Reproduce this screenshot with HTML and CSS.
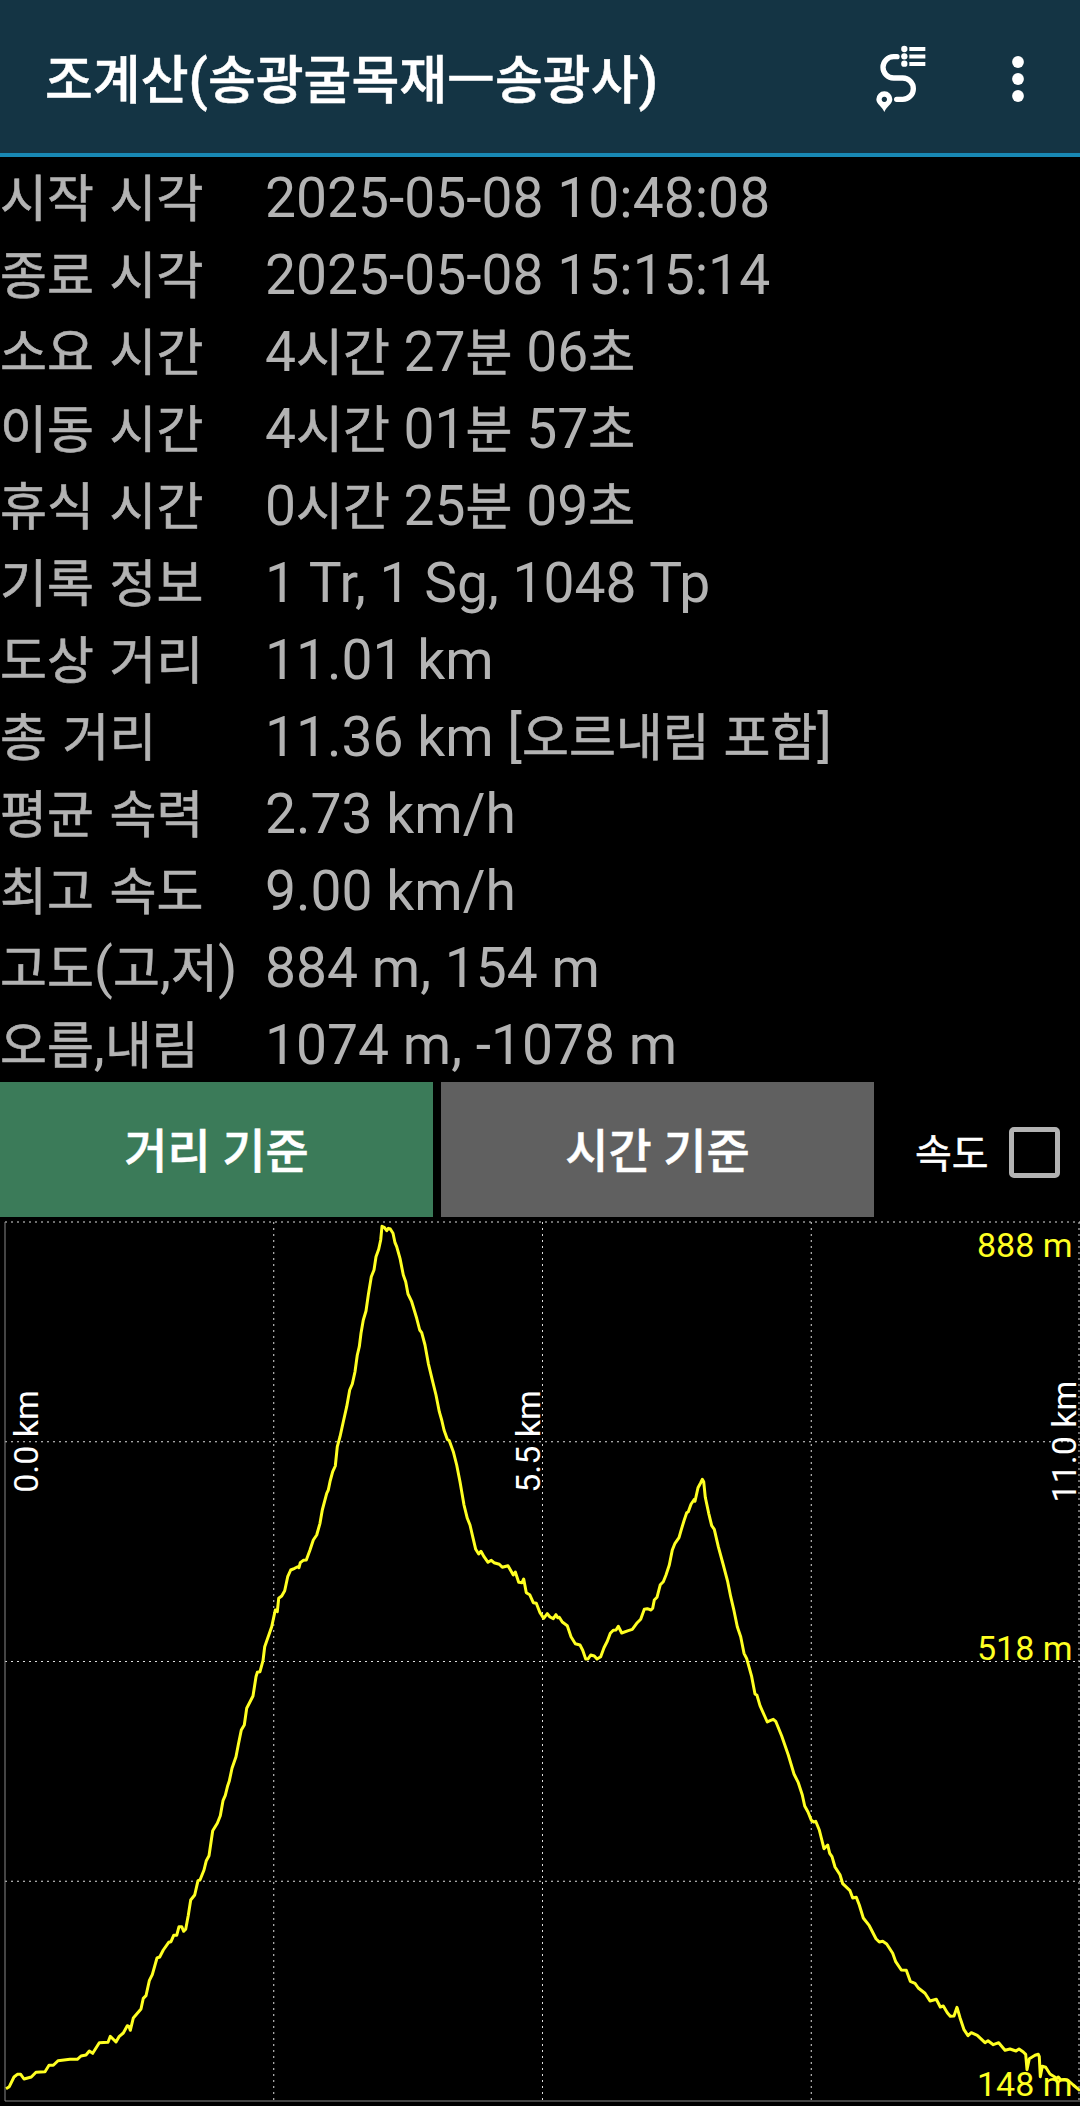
FILE: index.html
```
<!DOCTYPE html>
<html lang="ko">
  <head>
    <meta charset="utf-8">
    <meta name="viewport" content="width=device-width,initial-scale=1">
    <title>조계산(송광굴목재ㅡ송광사)</title>
    <link rel="stylesheet" href="styles.css">
  </head>
  <body>
    <div class="header">
      <h1 class="title">조계산<span class="en">(</span>송광굴목재ㅡ송광사<span class="en">)</span></h1>
      <svg class="icon-route" viewBox="110 75 150 204">
        <path d="M173 110H163A32 32 0 0 0 163 174H190A32 32 0 0 1 190 238H172" fill="none" stroke="#fff" stroke-width="16" stroke-linecap="round"/>
        <g fill="#fff">
          <circle cx="195" cy="87" r="9.5"/>
          <circle cx="195" cy="109" r="9.5"/>
          <circle cx="195" cy="131" r="9.5"/>
          <path d="M210 81h48v12h-48zM210 103.500h48v12h-48zM210 126h48v12h-48z"/>
          <path fill-rule="evenodd" d="M135 276C128 260 111 252 111 238A24 24 0 0 1 159 238C159 252 142 260 135 276ZM135 230a8 8 0 1 0 .1 0z"/>
        </g>
      </svg>
      <svg class="icon-more" viewBox="0 0 12 48">
        <circle cx="6" cy="7" r="5.900"/>
        <circle cx="6" cy="24" r="5.900"/>
        <circle cx="6" cy="41" r="5.900"/>
      </svg>
    </div>
    <div class="info">
      <div class="row"><span class="label">시작 시각</span><span class="value">2025-05-08 10:48:08</span></div>
      <div class="row"><span class="label">종료 시각</span><span class="value">2025-05-08 15:15:14</span></div>
      <div class="row"><span class="label">소요 시간</span><span class="value">4<b>시간</b> 27<b>분</b> 06<b>초</b></span></div>
      <div class="row"><span class="label">이동 시간</span><span class="value">4<b>시간</b> 01<b>분</b> 57<b>초</b></span></div>
      <div class="row"><span class="label">휴식 시간</span><span class="value">0<b>시간</b> 25<b>분</b> 09<b>초</b></span></div>
      <div class="row"><span class="label">기록 정보</span><span class="value">1 Tr, 1 Sg, 1048 Tp</span></div>
      <div class="row"><span class="label">도상 거리</span><span class="value">11.01 km</span></div>
      <div class="row"><span class="label">총 거리</span><span class="value">11.36 km [<b>오르내림</b> <b>포함</b>]</span></div>
      <div class="row"><span class="label">평균 속력</span><span class="value">2.73 km/h</span></div>
      <div class="row"><span class="label">최고 속도</span><span class="value">9.00 km/h</span></div>
      <div class="row"><span class="label">고도<span class="en">(</span>고<span class="en">,</span>저<span class="en">)</span></span><span class="value">884 m, 154 m</span></div>
      <div class="row"><span class="label">오름<span class="en">,</span>내림</span><span class="value">1074 m, -1078 m</span></div>
    </div>
    <div class="tabs">
      <div class="tab active">거리 기준</div>
      <div class="tab">시간 기준</div>
      <div class="speed"><span>속도</span><i class="check"></i></div>
    </div>
    <svg class="chart" viewBox="0 1217 1080 889">
      <g class="grid">
        <path d="M5 1222H1080M5 1441.750H1080M5 1661.500H1080M5 1881.250H1080"/>
        <path d="M273.750 1222V2101M542.500 1222V2101M811.250 1222V2101M1079 1222V2101"/>
      </g>
      <path class="axis" d="M5 1222V2101H1080"/>
      <g class="km">
        <text transform="translate(38 1441.500) rotate(-90)">0.0 km</text>
        <text transform="translate(540 1441.500) rotate(-90)">5.5 km</text>
        <text transform="translate(1076 1441.500) rotate(-90)">11.0 km</text>
      </g>
      <polyline class="alt" points="
        6,2088.7 9.3,2086.7 14,2077 17.3,2074.3 20.7,2074.3 24,2079 31.3,2077 36,2072.3 45,2071.7 49,2065.3
        53.3,2065.3 58,2060.7 70,2059.3 77.3,2059.3 81,2056 86,2055 89.3,2051 92.7,2053.3 99.3,2042.7 108,2042.3
        110.3,2036.3 116,2042 119.3,2036.3 123.3,2033 127.3,2025.7 129,2026.3 130.3,2030.3 133.3,2018 141,2009 143.3,1998.3
        146,1995.7 149.3,1980.7 152.3,1974.7 157,1958 159.7,1957 163.3,1950 168.7,1942.3 171,1941.7 173.7,1935.3 176.7,1935.3
        179,1926.7 181.7,1926.7 183.7,1931.3 185.7,1929.3 188.3,1915.3 190.7,1900 194.7,1895 198,1880.7 200,1880 204,1870
        206.3,1860.7 209,1855.7 212.7,1830.7 217.3,1823.3 220.3,1815.7 223,1800.7 225.3,1795.3 227.7,1785.7 229.3,1781 232,1768.3
        236,1756.7 238.3,1744.7 241.3,1730 244.3,1725 246.7,1708.3 253,1696 256,1676.7 257.3,1672.3 260,1671.7 263,1660.7
        264.7,1646.7 271.7,1626.7 275.3,1610 277.3,1611.7 278.7,1598.3 281.7,1596 284.7,1590.7 287.7,1576.7 290.7,1570 294.7,1568.3
        297.7,1566.7 299,1567.7 300.3,1562.7 303.3,1560.3 306.3,1560 310,1550 313.3,1540 316.7,1535 320,1523.3 322.3,1510
        326.7,1493.3 328.3,1490 330,1481.7 332.7,1471.7 335.3,1466 337.3,1446.7 340,1436.7 343.3,1421.7 346.7,1406.7 349.7,1390
        352.3,1384 355,1371.7 357.3,1355 359.3,1346.7 361,1333.3 363.3,1320 366,1311 368.3,1295 371.3,1276.7 374,1270
        376,1256.7 378.7,1249.3 380.7,1240 382,1226.3 384.3,1227.3 386.7,1230.7 388.3,1228.3 390.3,1229 393,1233.3 395,1242.7
        396.7,1246.7 400,1258.3 403.3,1275 405.7,1281.7 408,1294 411.7,1301.7 416.7,1318.3 419.7,1330 421.7,1332.7 425,1345
        428.3,1363.3 432.7,1381.7 436,1395 439.3,1411.7 441.7,1420 444,1430 447.3,1439.3 449.3,1440.7 453.3,1451.7 456.7,1465
        460,1481.7 464,1505 467.3,1518.3 470,1525 472.7,1536.7 475.7,1549.3 478.7,1554 481,1551.3 484,1556.7 488,1562.3
        491.3,1560.3 494,1562.7 499.3,1564.3 502.3,1567.3 508,1565.7 513.3,1575 515.3,1572 518.7,1582.3 522,1582.7 523.7,1579
        526.3,1592.7 529.7,1594.7 533.3,1602.7 536.3,1603.3 540,1612.7 543.7,1618.3 547.3,1613.7 550,1617 553.3,1618.7 556,1614.7
        557.7,1617.7 559.3,1617.3 562.3,1622 567.3,1625.7 571,1636.7 575.3,1643.7 580,1645 582.7,1650.3 585.7,1659 588,1659
        590.7,1655 594.3,1656 597,1659 600.7,1656.7 604,1647.7 607.3,1641.3 610.3,1633.3 613.3,1630.3 616,1630 618.3,1626.3
        621.7,1633 628.3,1630.7 632.3,1629.3 636.7,1623.3 640.7,1619.3 644.3,1609.3 647.3,1608.7 651,1610 652.7,1608.3 654.3,1600
        657,1597.3 660.3,1584.7 663.3,1581.7 666,1575 669.3,1565 672.3,1550 675,1543.3 679,1537.7 681,1530.7 684,1520.7
        686.7,1512.7 688.3,1511.7 691,1504.3 694,1499.7 695,1501.3 698,1487.7 700.7,1482.7 702.3,1479.3 703.7,1481.7 705.3,1497.3
        708.7,1513.3 711.7,1525.7 714.3,1529.3 718.3,1546.7 723.3,1565 727.7,1581.7 730.7,1596.7 734,1610.7 737.3,1626.7 740.7,1636.7
        744,1653.3 746.7,1658.7 751.7,1676.7 755,1694 757,1695.3 760,1705.7 767.3,1722 770,1720.7 773.3,1719.3 775.7,1721.3
        781.7,1736 788.3,1755 794,1774 798.3,1782.7 802.3,1795 804.7,1806 808,1812 811.3,1820.3 813.7,1822 815.7,1821.3
        819.3,1830 824,1848.7 827.7,1845 829.7,1853.3 832,1856.7 835,1867 840,1874.7 842.7,1883.7 850,1890.7 852.7,1898
        856.3,1897.3 859.3,1905 863.3,1918 869.3,1925.7 876,1938.7 879.3,1942 882.7,1941.3 886.7,1944 892.7,1953.3 895.7,1961.7
        901.3,1970 906.3,1970.3 910.3,1981.3 915,1983.3 918.3,1988 925,1993.3 930,2001 936.3,1999.3 940.3,2007 943.3,2006
        947.3,2012.7 950.3,2016.3 954,2016 957,2007.3 960,2017.7 964,2029.7 968,2035.7 971.3,2032.7 977.3,2035.3 985,2042.7
        988,2040.7 993.3,2044.7 998.7,2042.7 1005,2050.3 1010,2049 1016,2051 1019,2049 1023.3,2052 1025.7,2054.3 1027,2069.7
        1029.3,2058.7 1035,2055.3 1038.3,2054.3 1039.3,2056.7 1040.3,2076.7 1042.3,2066.3 1045.7,2067.3 1050,2074 1056.7,2078.3 1058.3,2077
        1060.7,2080 1067.7,2080 1073.3,2085 1080,2090.7"/>
      <g class="height">
        <text x="1072.500" y="1257">888 m</text>
        <text x="1072.500" y="1660">518 m</text>
        <text x="1072.500" y="2095.500">148 m</text>
      </g>
    </svg>
  </body>
</html>
```
FILE: styles.css
```
* {
  margin: 0;
  padding: 0;
  box-sizing: border-box;
}
body {
  width: 1080px;
  background: #000;
  color: #b3b3b3;
  font-family: Roboto, "Noto Sans CJK KR", sans-serif;
}
.header {
  display: flex;
  align-items: center;
  height: 157px;
  padding: 0 56px 0 45px;
  background: #143444;
  border-bottom: 4px solid #1888b4;
}
.title {
  flex: 1;
  padding-top: 9px;
  color: #fff;
  font-size: 52px;
  font-weight: 500;
  line-height: 76px;
  white-space: nowrap;
  -webkit-text-stroke: 0.500px #fff;
}
.title .en {
  font-size: 56px;
}
.icon-route {
  width: 50px;
  height: 68px;
  margin: 4px 86px 0 0;
}
.icon-more {
  width: 12px;
  height: 48px;
  margin-top: 5px;
  fill: #fff;
}
.info {
  height: 925px;
  padding-top: 3px;
}
.row {
  display: flex;
  align-items: baseline;
  height: 77px;
  line-height: 77px;
  font-size: 55.200px;
  white-space: nowrap;
}
.label {
  width: 265px;
  font-size: 51px;
  word-spacing: 3px;
  -webkit-text-stroke: 0.600px #b3b3b3;
}
.label .en {
  font-size: 56px;
  -webkit-text-stroke: 0;
}
.value b {
  font-size: 51px;
  font-weight: normal;
  -webkit-text-stroke: 0.600px #b3b3b3;
}
.tabs {
  display: flex;
  gap: 8px;
  height: 135px;
}
.tab {
  width: 433px;
  padding-top: 2px;
  background: #606060;
  color: #fff;
  font-size: 47px;
  font-weight: 500;
  line-height: 135px;
  text-align: center;
  -webkit-text-stroke: 0.500px #fff;
}
.tab.active {
  background: #3b7b59;
}
.speed {
  display: flex;
  flex: 1;
  align-items: center;
  justify-content: space-between;
  padding: 0 20px 0 33px;
  color: #fff;
  font-size: 40px;
  -webkit-text-stroke: 0.500px #fff;
}
.speed span {
  padding-top: 2px;
}
.check {
  width: 51px;
  height: 51px;
  margin-top: 5px;
  border: 5.500px solid #b3b3b3;
  border-radius: 5px;
}
.chart {
  display: block;
  width: 1080px;
  height: 889px;
  font-size: 34px;
}
.grid {
  fill: none;
  stroke: #ddd;
  stroke-dasharray: 2 4;
}
.axis {
  fill: none;
  stroke: #888;
}
.alt {
  fill: none;
  stroke: #ff2;
  stroke-width: 3;
  stroke-linejoin: round;
}
.km {
  fill: #fff;
  text-anchor: middle;
}
.height {
  fill: #ff2;
  text-anchor: end;
}
```
